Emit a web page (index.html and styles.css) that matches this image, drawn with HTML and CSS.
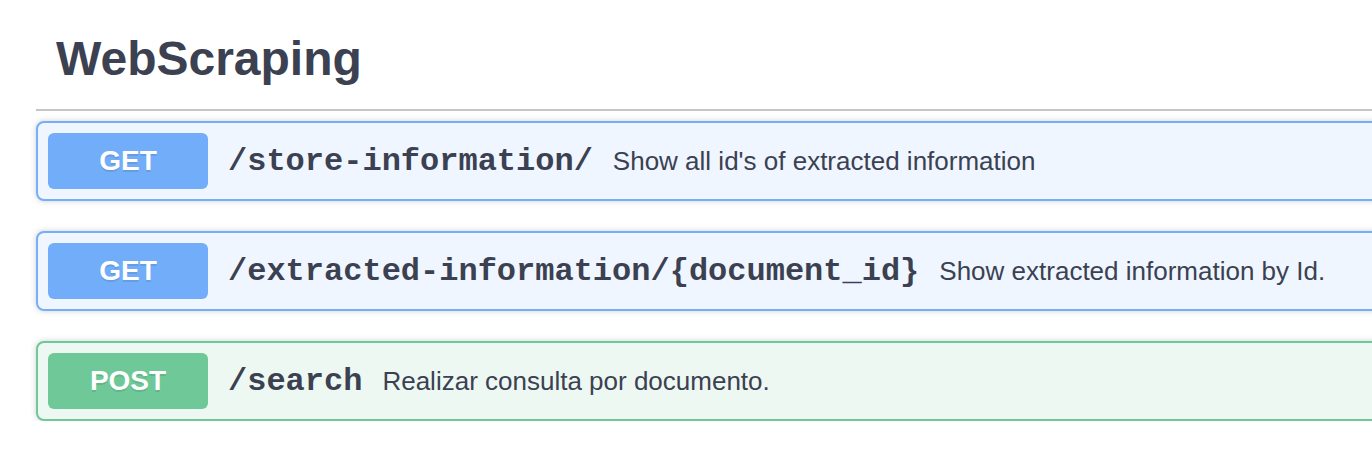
FILE: index.html
```html
<!DOCTYPE html>
<html lang="en">
<head>
<meta charset="utf-8">
<title>WebScraping</title>
<link rel="stylesheet" href="styles.css">
</head>
<body>
<div class="wrapper">
  <section class="tag-section">
    <h3 class="tag-title">WebScraping</h3>
    <div class="ops">
      <div class="opblock opblock-get">
        <span class="method">GET</span>
        <span class="path">/store-information/</span>
        <span class="desc">Show all id's of extracted information</span>
      </div>
      <div class="opblock opblock-get">
        <span class="method">GET</span>
        <span class="path">/extracted-information/{document_id}</span>
        <span class="desc">Show extracted information by Id.</span>
      </div>
      <div class="opblock opblock-post">
        <span class="method">POST</span>
        <span class="path">/search</span>
        <span class="desc">Realizar consulta por documento.</span>
      </div>
    </div>
  </section>
</div>
</body>
</html>
```

FILE: styles.css
```css
html, body {
  margin: 0;
  padding: 0;
  background: #ffffff;
  overflow: hidden;
}

body {
  font-family: "Liberation Sans", Arial, Helvetica, sans-serif;
  color: #3b4151;
}

.wrapper {
  padding: 0 0 0 36px;
  margin-right: -40px;
}

.tag-title {
  margin: 11px 0 10px;
  padding: 20px 40px 22px 20px;
  font-size: 48px;
  line-height: 56px;
  font-weight: 700;
  color: #3b4151;
  border-bottom: 2px solid #c4c5c9;
}

.ops {
  display: flex;
  flex-direction: column;
  gap: 30px;
}

.opblock {
  display: flex;
  align-items: center;
  padding: 10px;
  border: 2px solid;
  border-radius: 8px;
  box-shadow: 0 0 6px rgba(0, 0, 0, 0.19);
}

.opblock-get {
  background: #eff6ff;
  border-color: #73b0f9;
}

.opblock-post {
  background: #eef8f3;
  border-color: #6ec897;
}

.method {
  flex: none;
  width: 160px;
  padding: 12px 0;
  line-height: 32px;
  font-size: 28px;
  font-weight: 700;
  text-align: center;
  color: #ffffff;
  border-radius: 6px;
  text-shadow: 0 2px 0 rgba(0, 0, 0, 0.1);
}

.opblock-get .method {
  background: #71adf8;
}

.opblock-post .method {
  background: #6ec897;
}

.path {
  padding: 0 20px;
  font-family: "Liberation Mono", "Courier New", monospace;
  font-size: 32px;
  font-weight: 700;
  color: #3b4151;
}

.desc {
  font-size: 26px;
  color: #3b4151;
}
```
